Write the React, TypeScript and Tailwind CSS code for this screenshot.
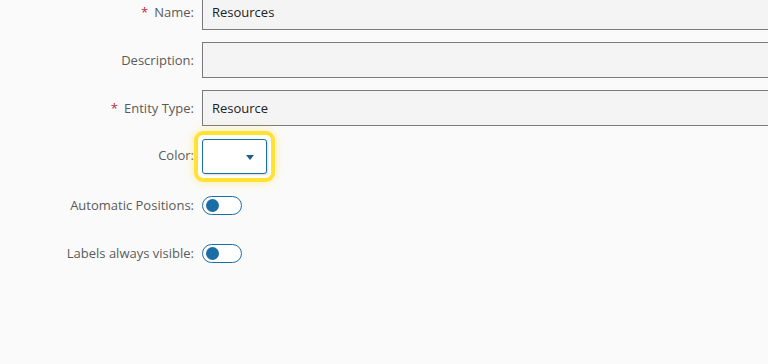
import React from 'react';

const Label: React.FC<{ text: string; required?: boolean; tight?: boolean }> = ({ text, required, tight }) => (
  <div className={`w-[194px] shrink-0 text-right text-[13px] text-[#5a5a5a] ${tight ? '' : 'pt-[2px]'}`}>
    {required && <span className="text-[#c0293b] mr-[6px]">*</span>}
    {text}
  </div>
);

const TextInput: React.FC<{ value?: string }> = ({ value }) => (
  <div className="flex-1 h-[36px] border border-[#7a7a7a] border-r-0 bg-[#f4f4f4] flex items-center px-[9px] pt-[2px] text-[13px] text-[#222]">
    {value}
  </div>
);

const Toggle: React.FC = () => (
  <div className="w-[40px] h-[19px] rounded-full border border-[#1b6ea5] bg-white flex items-center pl-[3px]">
    <div className="w-[13px] h-[13px] rounded-full bg-[#1b6ea5]" />
  </div>
);

export default function App() {
  return (
    <div
      className="w-[768px] h-[364px] overflow-hidden bg-[#fafafa]"
      style={{ fontFamily: '"Open Sans", "Liberation Sans", sans-serif' }}
    >
      <div className="flex flex-col gap-[12px] mt-[-6px]">
        <div className="flex items-center gap-[8px] h-[36px]">
          <Label text="Name:" required />
          <TextInput value="Resources" />
        </div>
        <div className="flex items-center gap-[8px] h-[36px]">
          <Label text="Description:" />
          <TextInput />
        </div>
        <div className="flex items-center gap-[8px] h-[36px]">
          <Label text="Entity Type:" required />
          <TextInput value="Resource" />
        </div>
        <div className="flex items-center gap-[8px] h-[36px]">
          <Label text="Color:" tight />
          <div className="ml-[-8px] rounded-[9px] border-4 border-[#ffe233] bg-white p-[4px] shadow-[0_0_10px_rgba(255,221,40,0.45)]">
            <div className="w-[65px] h-[35px] rounded-[3px] border border-[#1b6ea5] bg-white flex items-center justify-end pr-[12px] pt-[2px] shadow-[1px_1px_2px_rgba(0,0,0,0.15)]">
              <svg width="8" height="5" viewBox="0 0 8 5">
                <path d="M0 0 H8 L4 5 Z" fill="#1b5f8f" />
              </svg>
            </div>
          </div>
        </div>
        <div className="flex items-center gap-[8px] h-[36px] pt-[3px]">
          <Label text="Automatic Positions:" tight />
          <Toggle />
        </div>
        <div className="flex items-center gap-[8px] h-[36px] pt-[3px]">
          <Label text="Labels always visible:" tight />
          <Toggle />
        </div>
      </div>
    </div>
  );
}
